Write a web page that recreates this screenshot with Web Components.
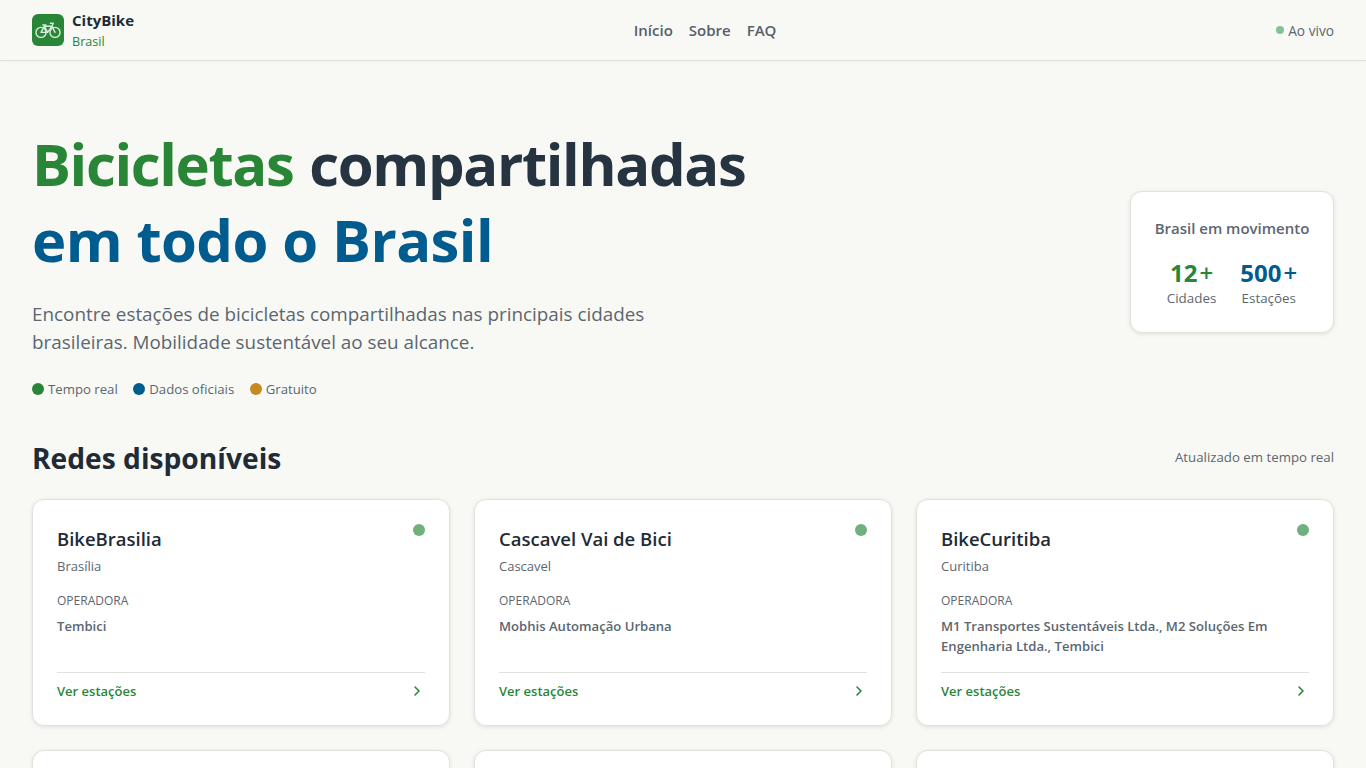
<!DOCTYPE html>
<html lang="pt-BR"><head><meta charset="utf-8"><title>CityBike Brasil</title>
<style>
html,body{margin:0;padding:0;height:768px;overflow:hidden;background:#f8f9f5;font-family:"Open Sans","Noto Sans",sans-serif;color:#212b36}
</style></head><body>
<cb-header></cb-header>
<cb-hero></cb-hero>
<cb-networks>
<cb-card name="BikeBrasilia" city="Brasília" op="Tembici"></cb-card>
<cb-card name="Cascavel Vai de Bici" city="Cascavel" op="Mobhis Automação Urbana"></cb-card>
<cb-card name="BikeCuritiba" city="Curitiba" op="M1 Transportes Sustentáveis Ltda., M2 Soluções Em Engenharia Ltda., Tembici"></cb-card>
<cb-card name="" city="" op=""></cb-card><cb-card name="" city="" op=""></cb-card><cb-card name="" city="" op=""></cb-card>
</cb-networks>
<script>
const def=(n,html)=>customElements.define(n,class extends HTMLElement{connectedCallback(){if(this.shadowRoot)return;const s=this.attachShadow({mode:"open"});s.innerHTML=typeof html==="function"?html(this):html;}});
def("cb-header",`<style>
:host{display:flex;align-items:center;justify-content:space-between;height:60px;padding:0 32px;background:#f8f9f5;border-bottom:1px solid #e0e0da;box-shadow:0 1px 2px rgba(0,0,0,.04);box-sizing:content-box}
.brand{display:flex;align-items:center;gap:8px}
.logo{width:32px;height:32px;border-radius:6px;background:#2a8637;display:flex;align-items:center;justify-content:center}
.txt{padding-top:2px}
.t{font-size:15px;font-weight:700;color:#212b36;line-height:20px}.s{font-size:12.6px;color:#2a8637;line-height:20px;margin-top:2px}
nav{display:flex;gap:16px;font-size:15px;font-weight:600;color:#55606a}
.live{display:flex;justify-content:flex-end;align-items:center;gap:4px;font-size:13.7px;color:#5c6670}
.d{width:8px;height:8px;border-radius:50%;background:#86c096}
</style>
<div class="brand"><div class="logo"><svg width="26" height="16" viewBox="0 0 26 16" fill="none" stroke="#d8ecdb" stroke-width="1.4" stroke-linecap="round" stroke-linejoin="round"><circle cx="6" cy="10.4" r="5"/><circle cx="20" cy="10.4" r="5"/><path d="M6 10.4L9.5 4.2H17L20 10.4M9.5 4.2L12.6 10.4L17 4.2M12.6 10.4H6M7.8 3H10.8M15.4 1.2H18.2L17 4.2"/></svg></div><div class="txt"><div class="t">CityBike</div><div class="s">Brasil</div></div></div>
<nav><span>Início</span><span>Sobre</span><span>FAQ</span></nav>
<div class="live"><span class="d"></span><span>Ao vivo</span></div>`);
def("cb-hero",`<style>
:host{display:flex;justify-content:space-between;align-items:center;padding:65px 32px 41px}
h1{margin:0;font-size:58px;line-height:76px;font-weight:700;color:#263340;letter-spacing:-.6px}
.l1{letter-spacing:-1.35px;word-spacing:2px}
.g{color:#2a8637}.b{color:#005b8f}
p{margin:22px 0 0;font-size:18.85px;line-height:28px;color:#5c6670;width:680px}
.tags{display:flex;gap:15.5px;margin-top:23px;font-size:13.2px;color:#5c6670;line-height:20px}
.tags span{display:flex;align-items:center;gap:4px}
i{width:12px;height:12px;border-radius:50%;display:block}
.c{width:204px;height:142px;box-sizing:border-box;background:#fff;border:1px solid #e2e2dc;border-radius:12px;box-shadow:0 1px 4px rgba(0,0,0,.1);padding:24px 0 0;text-align:center;margin-top:-2px}
.h{font-size:15px;font-weight:600;color:#5c6670;line-height:24px}
.row{display:flex;justify-content:center;gap:24px;margin-top:18px}
.n{font-size:24px;font-weight:700;line-height:30px;display:flex;justify-content:center;gap:2px}.n small{font-size:24px;font-weight:600}.l{font-size:13.4px;color:#5c6670;line-height:20px}
</style>
<div><h1><span class="l1"><span class="g">Bicicletas</span> compartilhadas</span><br><span class="b">em todo o Brasil</span></h1>
<p>Encontre estações de bicicletas compartilhadas nas principais cidades brasileiras. Mobilidade sustentável ao seu alcance.</p>
<div class="tags"><span><i style="background:#2a8637"></i>Tempo real</span><span><i style="background:#005b8f"></i>Dados oficiais</span><span><i style="background:#c58a22"></i>Gratuito</span></div></div>
<div class="c"><div class="h">Brasil em movimento</div><div class="row"><div><div class="n g">12<small>+</small></div><div class="l">Cidades</div></div><div><div class="n b">500<small>+</small></div><div class="l">Estações</div></div></div></div>`);
def("cb-networks",`<style>
:host{display:block;padding:0 32px}
.top{display:flex;justify-content:space-between;align-items:center;margin-bottom:23px}
h2{margin:0;font-size:28.2px;line-height:36px;font-weight:700;color:#212b36}
.u{font-size:13.25px;color:#5c6670;padding-bottom:2px}
.grid{display:grid;grid-template-columns:repeat(3,1fr);gap:24px}
::slotted(*){min-width:0}
</style><div class="top"><h2>Redes disponíveis</h2><span class="u">Atualizado em tempo real</span></div><div class="grid"><slot></slot></div>`);
def("cb-card",h=>`<style>
:host{display:flex;flex-direction:column;box-sizing:border-box;height:227px;background:#fff;border:1px solid #e2e2dc;border-radius:12px;box-shadow:0 1px 4px rgba(0,0,0,.1);padding:25px 24px 24px;position:relative}
.dot{position:absolute;top:24px;right:24px;width:12px;height:12px;border-radius:50%;background:#70b07c}
.n{font-size:18.5px;font-weight:600;line-height:28px;color:#212b36}
.c{font-size:13px;color:#5c6670;line-height:20px;margin-top:3px}
.o{font-size:12px;color:#5c6670;line-height:16px;margin-top:17px}
.v{font-size:13.1px;font-weight:600;color:#5c6670;line-height:20px;margin-top:7px;flex:1}
.f{display:flex;justify-content:space-between;align-items:center;border-top:1px solid #e2e2dc;padding-top:8px;font-size:13px;font-weight:600;color:#2a8637;line-height:20px}
</style>${h.getAttribute("name")?`<span class="dot"></span><div class="n">${h.getAttribute("name")}</div><div class="c">${h.getAttribute("city")}</div><div class="o">OPERADORA</div><div class="v">${h.getAttribute("op")}</div><div class="f"><span>Ver estações</span><svg width="16" height="16" viewBox="0 0 16 16" fill="none" stroke="#2a8637" stroke-width="1.6" stroke-linecap="round" stroke-linejoin="round"><path d="M6 4L10 8L6 12"/></svg></div>`:""}`);
</script>
</body></html>
